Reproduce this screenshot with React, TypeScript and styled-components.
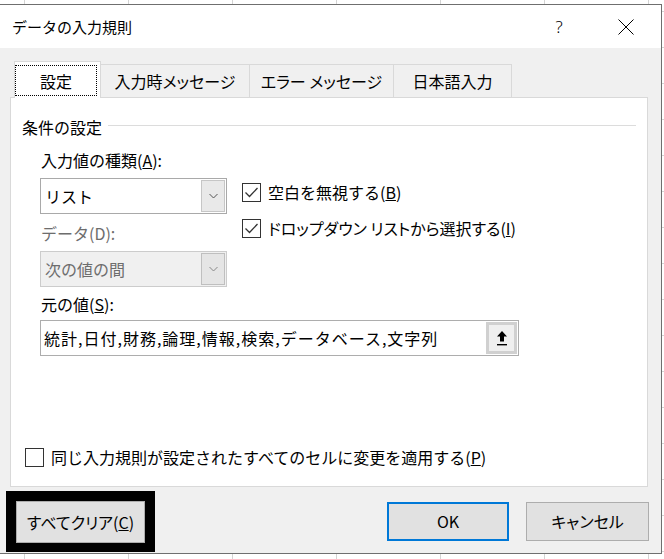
import React from 'react';
import styled, { createGlobalStyle } from 'styled-components';

const GlobalStyle = createGlobalStyle`
  html, body {
    margin: 0;
    padding: 0;
  }
  body {
    font-family: 'Noto Sans CJK JP', 'Noto Sans', sans-serif;
    font-size: 16px;
    color: #000;
  }
  * {
    box-sizing: border-box;
  }
`;

const Sheet = styled.div`
  position: relative;
  width: 664px;
  height: 559px;
  overflow: hidden;
  background-color: #fff;
  background-image: linear-gradient(to right, #d4d4d4 1px, transparent 1px),
    linear-gradient(to bottom, #d4d4d4 1px, transparent 1px);
  background-size: 104px 36px;
  background-position: 24px 11px;
`;

const Dialog = styled.div`
  position: absolute;
  left: -1px;
  top: 4px;
  width: 663px;
  height: 550px;
  border: 1px solid #6f6f6f;
  background: #f0f0f0;
  display: flex;
  flex-direction: column;
`;

const TitleBar = styled.div`
  height: 43px;
  flex: none;
  background: #fff;
  display: flex;
  align-items: center;
  padding-left: 12px;
`;

const TitleText = styled.div`
  flex: 1;
  font-size: 15px;
  line-height: 20px;
`;

const TitleButton = styled.div<{ $width: number }>`
  width: ${(p) => p.$width}px;
  height: 100%;
  display: flex;
  align-items: center;
  justify-content: center;
  font-size: 17px;
  font-family: 'Noto Sans', sans-serif;
  font-weight: 300;
`;

const Body = styled.div`
  flex: none;
  padding: 16px 13px 0 10px;
`;

const TabRow = styled.div`
  height: 33px;
  display: flex;
  align-items: flex-end;
  padding-left: 4px;
  position: relative;
  z-index: 1;
`;

const Tab = styled.div<{ $width: number; $active?: boolean }>`
  width: ${(p) => p.$width}px;
  height: ${(p) => (p.$active ? 37 : 33)}px;
  margin-bottom: ${(p) => (p.$active ? -1 : 0)}px;
  border: 1px solid #d9d9d9;
  border-bottom: none;
  background: ${(p) => (p.$active ? '#fff' : '#f0f0f0')};
  position: relative;
  z-index: ${(p) => (p.$active ? 2 : 1)};
  display: flex;
  padding: ${(p) => (p.$active ? '3px 3px 2px 0' : '0')};
  font-feature-settings: 'palt';

  & + & {
    margin-left: -1px;
  }
`;

const TabLabel = styled.div<{ $focus?: boolean }>`
  flex: 1;
  display: flex;
  align-items: center;
  justify-content: center;
  line-height: 20px;
  border: 1px dotted ${(p) => (p.$focus ? '#000' : 'transparent')};
`;

const Panel = styled.div`
  height: 390px;
  border: 1px solid #d9d9d9;
  background: #fff;
  display: flex;
  flex-direction: column;
  padding: 0 11px 19px 11px;
`;

const GroupHeader = styled.div`
  margin-top: 19px;
  height: 20px;
  display: flex;
  align-items: center;
  line-height: 20px;
`;

const GroupRule = styled.div`
  flex: 1;
  height: 1px;
  margin: 0 0 4px 6px;
  background: #dcdcdc;
`;

const Group = styled.div`
  padding-left: 18px;
  display: flex;
  flex-direction: column;
`;

const FieldLabel = styled.div<{ $gap: number; $disabled?: boolean }>`
  margin-top: ${(p) => p.$gap}px;
  padding-left: 1px;
  line-height: 20px;
  height: 20px;
  color: ${(p) => (p.$disabled ? '#6d6d6d' : '#000')};
`;

const FieldRow = styled.div`
  margin-top: 8px;
  display: flex;
  gap: 15px;
`;

const LeftColumn = styled.div`
  width: 187px;
  display: flex;
  flex-direction: column;
`;

const RightColumn = styled.div`
  padding-top: 4px;
  display: flex;
  flex-direction: column;
  gap: 16px;
`;

const Combo = styled.div<{ $disabled?: boolean; $gap?: number }>`
  height: 36px;
  margin-top: ${(p) => p.$gap ?? 0}px;
  border: 1px solid ${(p) => (p.$disabled ? '#cccccc' : '#a9a9a9')};
  background: ${(p) => (p.$disabled ? '#f0f0f0' : '#fff')};
  color: ${(p) => (p.$disabled ? '#6d6d6d' : '#000')};
  display: flex;
  align-items: stretch;
  padding: 1px;
`;

const ComboValue = styled.div`
  flex: 1;
  display: flex;
  align-items: center;
  padding-left: 3px;
  line-height: 20px;
`;

const ComboButton = styled.div<{ $disabled?: boolean }>`
  width: 24px;
  background: ${(p) => (p.$disabled ? '#e5e5e5' : '#e9e9e9')};
  border: 1px solid ${(p) => (p.$disabled ? '#bfbfbf' : '#c6c6c6')};
  display: flex;
  align-items: center;
  justify-content: center;
`;

const CheckRow = styled.label<{ $indent?: number }>`
  display: flex;
  align-items: center;
  gap: 7px;
  height: 20px;
  line-height: 20px;
  margin-left: ${(p) => p.$indent ?? 0}px;
`;

const CheckBox = styled.span`
  width: 19px;
  height: 19px;
  border: 1px solid #333;
  background: #fff;
  display: flex;
  align-items: center;
  justify-content: center;
`;

const Palt = styled.span`
  font-feature-settings: 'palt';
`;

const SourceBox = styled.div`
  margin-top: 6px;
  width: 479px;
  height: 36px;
  border: 1px solid #adadad;
  background: #fff;
  display: flex;
  align-items: stretch;
  padding: 1px 1px 1px 3px;
`;

const SourceValue = styled.div`
  flex: 1;
  display: flex;
  align-items: center;
  line-height: 20px;
  white-space: nowrap;
  letter-spacing: 1px;
`;

const PickButton = styled.div`
  width: 31px;
  border: 3px solid #d0d0d0;
  background: #efefef;
  display: flex;
  align-items: center;
  justify-content: center;
`;

const Spacer = styled.div`
  flex: 1;
`;

const Footer = styled.div`
  flex: 1;
  display: flex;
  align-items: center;
  padding: 2px 12px 0 6px;
`;

const FocusFrame = styled.div`
  border: solid #000;
  border-width: 10px 10px 9px 10px;
  display: flex;
`;

const Button = styled.div<{ $width: number; $default?: boolean }>`
  width: ${(p) => p.$width}px;
  height: ${(p) => (p.$default ? 39 : 42)}px;
  background: #e1e1e1;
  border: ${(p) => (p.$default ? '2px solid #0078d7' : '1px solid #adadad')};
  display: flex;
  align-items: center;
  justify-content: center;
  line-height: 20px;
  font-feature-settings: 'palt';
`;

const DialogButton = styled(Button)`
  height: 39px;
`;

const ButtonGroup = styled.div`
  margin-left: auto;
  display: flex;
  gap: 17px;
`;

const Chevron = ({ color }: { color: string }) => (
  <svg width="9" height="6" viewBox="0 0 9 6">
    <polyline points="0.5,1 4.5,5 8.5,1" fill="none" stroke={color} strokeWidth="1" />
  </svg>
);

const Tick = () => (
  <svg width="15" height="13" viewBox="0 0 15 13">
    <polyline points="1.5,6.5 5.5,10.5 13.5,2" fill="none" stroke="#333" strokeWidth="1.3" />
  </svg>
);

const UpArrow = () => (
  <svg width="10" height="15" viewBox="0 0 10 15">
    <polygon points="5,0 10,5.5 7,5.5 7,10.5 3,10.5 3,5.5 0,5.5" fill="#000" />
    <rect x="0" y="13" width="10" height="1.4" fill="#000" />
  </svg>
);

const CloseIcon = () => (
  <svg width="16" height="16" viewBox="0 0 16 16">
    <path d="M0.5 0.5 L15.5 15.5 M15.5 0.5 L0.5 15.5" stroke="#000" strokeWidth="1" />
  </svg>
);

const Check = ({ checked, indent, children }: { checked?: boolean; indent?: number; children: React.ReactNode }) => (
  <CheckRow $indent={indent}>
    <CheckBox>{checked && <Tick />}</CheckBox>
    <span>{children}</span>
  </CheckRow>
);

const tabs = [
  { label: '設定', width: 87 },
  { label: '入力時メッセージ', width: 150 },
  { label: 'エラー メッセージ', width: 145 },
  { label: '日本語入力', width: 119 },
];

export default function App() {
  return (
    <>
      <GlobalStyle />
      <Sheet>
        <Dialog>
          <TitleBar>
            <TitleText>データの入力規則</TitleText>
            <TitleButton $width={64}>?</TitleButton>
            <TitleButton $width={70}>
              <CloseIcon />
            </TitleButton>
          </TitleBar>
          <Body>
            <TabRow>
              {tabs.map((t, i) => (
                <Tab key={t.label} $width={t.width} $active={i === 0}>
                  <TabLabel $focus={i === 0}>{t.label}</TabLabel>
                </Tab>
              ))}
            </TabRow>
            <Panel>
              <GroupHeader>
                条件の設定
                <GroupRule />
              </GroupHeader>
              <Group>
                <FieldLabel $gap={13}>
                  入力値の種類(<u>A</u>):
                </FieldLabel>
                <FieldRow>
                  <LeftColumn>
                    <Combo>
                      <ComboValue>リスト</ComboValue>
                      <ComboButton>
                        <Chevron color="#555" />
                      </ComboButton>
                    </Combo>
                    <FieldLabel $gap={9} $disabled>
                      データ(D):
                    </FieldLabel>
                    <Combo $disabled $gap={8}>
                      <ComboValue>次の値の間</ComboValue>
                      <ComboButton $disabled>
                        <Chevron color="#888" />
                      </ComboButton>
                    </Combo>
                  </LeftColumn>
                  <RightColumn>
                    <Check checked>
                      空白を無視する(<u>B</u>)
                    </Check>
                    <Check checked>
                      <Palt>ドロップダウン リストから選択する</Palt>(<u>I</u>)
                    </Check>
                  </RightColumn>
                </FieldRow>
                <FieldLabel $gap={7}>
                  元の値(<u>S</u>):
                </FieldLabel>
                <SourceBox>
                  <SourceValue>統計,日付,財務,論理,情報,検索,データベース,文字列</SourceValue>
                  <PickButton>
                    <UpArrow />
                  </PickButton>
                </SourceBox>
              </Group>
              <Spacer />
              <Check indent={3}>
                同じ入力規則が設定されたすべてのセルに変更を適用する(<u>P</u>)
              </Check>
            </Panel>
          </Body>
          <Footer>
            <FocusFrame>
              <Button $width={129}>
                すべてクリア(<u>C</u>)
              </Button>
            </FocusFrame>
            <ButtonGroup>
              <DialogButton $width={122} $default>
                OK
              </DialogButton>
              <DialogButton $width={123}>キャンセル</DialogButton>
            </ButtonGroup>
          </Footer>
        </Dialog>
      </Sheet>
    </>
  );
}
